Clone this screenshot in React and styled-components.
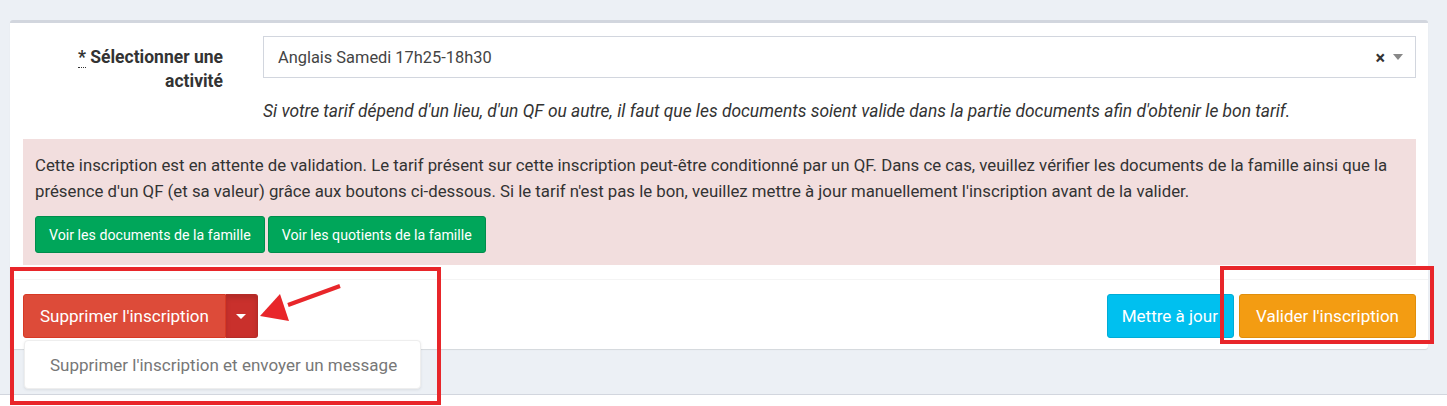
import React from 'react'
import styled, { createGlobalStyle } from 'styled-components'

const GlobalStyle = createGlobalStyle`
    body {
        margin: 0;
        background: #fff;
        font-family: Roboto, "Liberation Sans", sans-serif;
        color: #333;
    }
`

const App = () => {
    return (
        <Root>
            <GlobalStyle />
            <Page>
                <Card>
                    <CardBody>
                        <FormRow>
                            <Label>
                                <Abbr title="obligatoire">*</Abbr> Sélectionner une activité
                            </Label>
                            <Field>
                                <Select>
                                    <SelectValue>Anglais Samedi 17h25-18h30</SelectValue>
                                    <SelectClear>×</SelectClear>
                                    <SelectArrow />
                                </Select>
                                <Help>
                                    Si votre tarif dépend d'un lieu, d'un QF ou autre, il faut que les documents soient valide dans la partie documents afin d'obtenir le bon tarif.
                                </Help>
                            </Field>
                        </FormRow>
                        <Alert>
                            <AlertText>
                                Cette inscription est en attente de validation. Le tarif présent sur cette inscription peut-être conditionné par un QF. Dans ce cas, veuillez vérifier les documents de la famille ainsi que la présence d'un QF (et sa valeur) grâce aux boutons ci-dessous. Si le tarif n'est pas le bon, veuillez mettre à jour manuellement l'inscription avant de la valider.
                            </AlertText>
                            <AlertActions>
                                <SmallButton>Voir les documents de la famille</SmallButton>
                                <SmallButton>Voir les quotients de la famille</SmallButton>
                            </AlertActions>
                        </Alert>
                    </CardBody>
                    <Footer>
                        <SplitGroup>
                            <Button $variant="danger">Supprimer l'inscription</Button>
                            <CaretButton>
                                <Caret />
                            </CaretButton>
                            <Menu>
                                <MenuItem>Supprimer l'inscription et envoyer un message</MenuItem>
                            </Menu>
                        </SplitGroup>
                        <RightActions>
                            <Button $variant="info">Mettre à jour</Button>
                            <Button $variant="warning">Valider l'inscription</Button>
                        </RightActions>
                    </Footer>
                </Card>
            </Page>
            <Highlight style={{ left: 10, top: 267, width: 431, height: 138 }} />
            <Highlight style={{ left: 1220, top: 266, width: 214, height: 78 }} />
            <Arrow width="100" height="50" viewBox="0 0 100 50">
                <line x1="92" y1="4" x2="40" y2="23" stroke="#e8262a" strokeWidth="4" />
                <polygon points="12,34 32,12 41,39" fill="#e8262a" />
            </Arrow>
        </Root>
    )
}

export default App

const Root = styled.div`
    position: relative;
    height: 406px;
    background: #fff;
    overflow: hidden;
`

const Page = styled.div`
    background: #ecf0f5;
    height: 395px;
    border-bottom: 1px solid #d2d6de;
    padding: 20px 19px 0 10px;
    box-sizing: border-box;
`

const Card = styled.div`
    background: #fff;
    border-top: 3px solid #d2d6de;
    border-radius: 3px;
    box-shadow: 0 1px 1px rgba(0, 0, 0, 0.1);
`

const CardBody = styled.div`
    padding: 13px 12px 14px 13px;
`

const FormRow = styled.div`
    display: flex;
    align-items: flex-start;
`

const Label = styled.label`
    width: 200px;
    margin-right: 40px;
    text-align: right;
    font-weight: bold;
    font-size: 17.5px;
    line-height: 24px;
    padding-top: 9px;
    color: #333;
`

const Abbr = styled.abbr`
    text-decoration: none;
    border-bottom: 1px dotted #333;
    cursor: help;
`

const Field = styled.div`
    flex: 1;
`

const Select = styled.div`
    display: flex;
    align-items: center;
    height: 42px;
    box-sizing: border-box;
    border: 1px solid #d2d6de;
    padding: 0 12px 0 14px;
`

const SelectValue = styled.span`
    flex: 1;
    font-size: 16.4px;
    color: #444;
`

const SelectClear = styled.span`
    font-size: 18px;
    font-weight: bold;
    color: #333;
    margin-right: 8px;
`

const SelectArrow = styled.span`
    width: 0;
    height: 0;
    border-left: 5px solid transparent;
    border-right: 5px solid transparent;
    border-top: 6px solid #888;
`

const Help = styled.p`
    margin: 21px 0 0;
    font-style: italic;
    font-size: 17.4px;
    line-height: 24px;
    color: #333;
`

const Alert = styled.div`
    margin-top: 16px;
    background: #f2dede;
    padding: 13px 0 12px 12px;
`

const AlertText = styled.p`
    margin: 0;
    font-size: 16.8px;
    line-height: 26px;
    color: #333;
`

const AlertActions = styled.div`
    display: flex;
    gap: 3px;
    margin-top: 12px;
`

const SmallButton = styled.button`
    height: 37px;
    padding: 0 13px;
    background: #00a65a;
    border: 1px solid #008d4c;
    border-radius: 3px;
    color: #fff;
    font-family: inherit;
    font-size: 14.2px;
`

const Footer = styled.div`
    display: flex;
    justify-content: space-between;
    align-items: center;
    border-top: 1px solid #f4f4f4;
    padding: 14px 12px 11px 13px;
`

const SplitGroup = styled.div`
    position: relative;
    display: flex;
`

const RightActions = styled.div`
    display: flex;
    gap: 5px;
`

const colors = {
    danger: ['#dd4b39', '#d73925'],
    info: ['#00c0ef', '#00acd6'],
    warning: ['#f39c12', '#e08e0b'],
}

const Button = styled.button`
    height: 44px;
    padding: 0 16px;
    background: ${(p) => colors[p.$variant][0]};
    border: 1px solid ${(p) => colors[p.$variant][1]};
    border-radius: 3px;
    color: #fff;
    font-family: inherit;
    font-size: 17px;
    ${(p) => p.$variant === 'info' && 'padding: 0 15px 0 14px;'}
    ${(p) => p.$variant === 'danger' && 'border-top-right-radius: 0; border-bottom-right-radius: 0;'}
`

const CaretButton = styled.button`
    width: 32px;
    height: 44px;
    display: flex;
    align-items: center;
    justify-content: center;
    background: #c9302c;
    border: 1px solid #b52b27;
    border-left: none;
    border-radius: 0 3px 3px 0;
    box-shadow: inset 0 3px 5px rgba(0, 0, 0, 0.125);
`

const Caret = styled.span`
    width: 0;
    height: 0;
    border-left: 5px solid transparent;
    border-right: 5px solid transparent;
    border-top: 5px solid #fff;
`

const Menu = styled.ul`
    position: absolute;
    top: 46px;
    left: 1px;
    margin: 0;
    padding: 0;
    list-style: none;
    background: #fff;
    border: 1px solid #eee;
    border-radius: 4px;
    box-shadow: 0 1px 3px rgba(0, 0, 0, 0.08);
    z-index: 5;
`

const MenuItem = styled.li`
    width: 395px;
    height: 47px;
    display: flex;
    align-items: center;
    padding-left: 25px;
    box-sizing: border-box;
    font-size: 17px;
    color: #777;
    white-space: nowrap;
`

const Highlight = styled.div`
    position: absolute;
    border: 4px solid #e8262a;
    box-sizing: border-box;
    z-index: 10;
`

const Arrow = styled.svg`
    position: absolute;
    left: 248px;
    top: 282px;
    z-index: 10;
`
